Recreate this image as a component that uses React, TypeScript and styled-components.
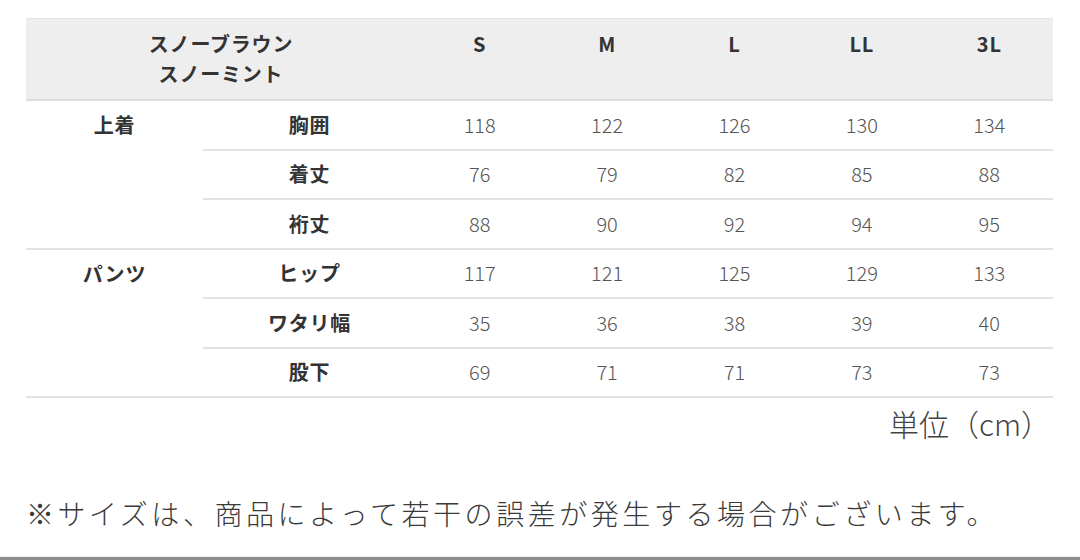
import styled, { createGlobalStyle } from 'styled-components';

const GlobalStyle = createGlobalStyle`
  body {
    margin: 0;
    background: #fff;
    font-family: "Noto Sans CJK JP", "Noto Sans", sans-serif;
  }
`;

const Page = styled.div`
  width: 1080px;
  height: 560px;
  display: flex;
  flex-direction: column;
  overflow: hidden;
`;

const Table = styled.table`
  margin: 18px 27px 0 26px;
  width: 1027px;
  border-collapse: collapse;
  table-layout: fixed;
  font-size: 20px;
  color: #333;
`;

const HeadRow = styled.tr`
  background: #eeeeee;
  border-top: 1px solid #e4e4e4;
  border-bottom: 2px solid #dcdcdc;
`;

const HeadCell = styled.th`
  padding: 10px 0;
  line-height: 30px;
  font-weight: 700;
  text-align: center;
  vertical-align: top;
  letter-spacing: 0.8px;
  color: #333;
`;

const Row = styled.tr``;

const GroupCell = styled.td`
  padding: 9px 0 0;
  line-height: 30px;
  vertical-align: top;
  text-align: center;
  font-weight: 700;
  letter-spacing: 0.8px;
  border-bottom: 2px solid #e2e2e2;
`;

const Cell = styled.td<{ $bold?: boolean }>`
  padding: 0;
  height: 47.5px;
  line-height: 30px;
  text-align: center;
  vertical-align: middle;
  font-weight: ${(p) => (p.$bold ? 700 : 300)};
  color: ${(p) => (p.$bold ? '#333' : '#555')};
  letter-spacing: ${(p) => (p.$bold ? '0.8px' : '0')};
  border-bottom: 2px solid #e2e2e2;
`;

const Unit = styled.div`
  margin: 1px 29px 0 0;
  text-align: right;
  font-size: 30px;
  line-height: 48px;
  font-weight: 300;
  color: #444;
`;

const Note = styled.p`
  margin: 46px 0 0 26px;
  font-size: 28px;
  line-height: 40px;
  letter-spacing: 3.55px;
  font-weight: 300;
  color: #3a3a3a;
`;

const BottomBar = styled.div`
  margin-top: auto;
  height: 3px;
  border-top: 1px solid #f0f0f0;
  background: #8c8c8c;
`;

const sizes = ['S', 'M', 'L', 'LL', '3L'];

const groups = [
  {
    name: '上着',
    rows: [
      { label: '胸囲', values: [118, 122, 126, 130, 134] },
      { label: '着丈', values: [76, 79, 82, 85, 88] },
      { label: '裄丈', values: [88, 90, 92, 94, 95] },
    ],
  },
  {
    name: 'パンツ',
    rows: [
      { label: 'ヒップ', values: [117, 121, 125, 129, 133] },
      { label: 'ワタリ幅', values: [35, 36, 38, 39, 40] },
      { label: '股下', values: [69, 71, 71, 73, 73] },
    ],
  },
];

function App() {
  return (
    <Page>
      <GlobalStyle />
      <Table>
        <colgroup>
          <col style={{ width: 177 }} />
          <col style={{ width: 213 }} />
          {sizes.map((s) => (
            <col key={s} />
          ))}
        </colgroup>
        <thead>
          <HeadRow>
            <HeadCell colSpan={2}>
              スノーブラウン
              <br />
              スノーミント
            </HeadCell>
            {sizes.map((s) => (
              <HeadCell key={s}>{s}</HeadCell>
            ))}
          </HeadRow>
        </thead>
        <tbody>
          {groups.map((g) =>
            g.rows.map((r, i) => (
              <Row key={r.label}>
                {i === 0 && <GroupCell rowSpan={g.rows.length}>{g.name}</GroupCell>}
                <Cell $bold>{r.label}</Cell>
                {r.values.map((v, j) => (
                  <Cell key={j}>{v}</Cell>
                ))}
              </Row>
            ))
          )}
        </tbody>
      </Table>
      <Unit>単位（cm）</Unit>
      <Note>※サイズは、商品によって若干の誤差が発生する場合がございます。</Note>
      <BottomBar />
    </Page>
  );
}

export default App;
